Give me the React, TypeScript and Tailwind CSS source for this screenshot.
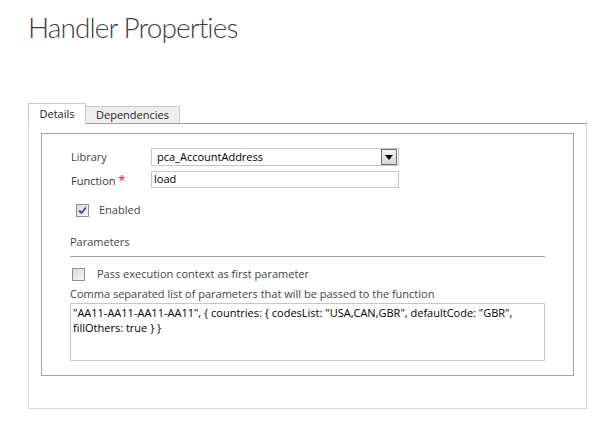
import React from "react";

function CheckBox({ checked }: { checked?: boolean }) {
  return (
    <div className="w-[13px] h-[13px] border border-[#8e8f8f] bg-gradient-to-br from-[#dcdcdc] to-[#f6f6f6] flex items-center justify-center">
      {checked && (
        <svg width="9" height="9" viewBox="0 0 9 9">
          <path d="M1 4.5 L3.5 7 L8 1.5" fill="none" stroke="#3d4f75" strokeWidth="1.8" />
        </svg>
      )}
    </div>
  );
}

export default function App() {
  return (
    <div
      className="w-[616px] h-[432px] bg-white overflow-hidden text-[11px] text-[#444]"
      style={{ fontFamily: '"Open Sans", "Noto Sans", sans-serif' }}
    >
      {/* title */}
      <div className="h-[103px] pl-[28px] pt-[7px]">
        <h1
          className="text-[28px] font-light text-[#404040] leading-[40px] tracking-[-0.9px]"
          style={{ fontFamily: 'Lato, "Open Sans", sans-serif' }}
        >
          Handler Properties
        </h1>
      </div>

      <div className="ml-[28px] w-[559px]">
        {/* tabs */}
        <div className="flex items-end h-[21px]">
          <div className="w-[58px] h-[21px] border border-b-0 border-[#c8c8c8] bg-white flex items-center justify-center text-[#222]">
            Details
          </div>
          <div className="w-[94px] h-[18px] bg-[#efefef] border-t border-r border-b border-[#c8c8c8] border-b-[#a0a0a0] flex items-center justify-center text-[#222]">
            Dependencies
          </div>
          <div className="flex-1 border-b border-[#a0a0a0]" />
        </div>

        {/* panel */}
        <div className="h-[285px] border-l border-r border-b border-[#d6d6d6] pl-[12px] pr-[12px] pt-[9px]">
          <div className="h-[243px] border border-[#a3a3a3] px-[28px]">
            {/* library */}
            <div className="mt-[14px] h-[18px] flex items-center">
              <div className="w-[81px] pl-[1px]">Library</div>
              <div className="flex-1 h-[18px] border border-[#c6c6c6] flex items-center justify-between pl-[5px] pr-[1px] text-black">
                <span>pca_AccountAddress</span>
                <div className="w-[16px] h-[16px] border border-[#6f6f6f] bg-gradient-to-b from-[#f4f4f4] to-[#d6d6d6] flex items-center justify-center">
                  <svg width="8" height="5" viewBox="0 0 8 5">
                    <path d="M0 0 H8 L4 5 Z" fill="#000" />
                  </svg>
                </div>
              </div>
              <div className="w-[146px]" />
            </div>

            {/* function */}
            <div className="mt-[5px] h-[17px] flex items-center">
              <div className="w-[81px] pl-[1px] pt-[3px] text-[#333]">
                Function <span className="text-[#d11] text-[13px]">*</span>
              </div>
              <div className="flex-1 h-[17px] border border-[#c6c6c6] flex items-center pl-[2px] text-black">
                load
              </div>
              <div className="w-[146px]" />
            </div>

            {/* enabled */}
            <div className="mt-[16px] h-[13px] flex items-center pl-[6px]">
              <CheckBox checked />
              <span className="ml-[10px]">Enabled</span>
            </div>

            {/* parameters */}
            <div className="mt-[17px] h-[16px] flex items-center">Parameters</div>
            <div className="mt-[6px] border-b border-[#a0a0a0]" />

            <div className="mt-[11px] h-[13px] flex items-center pl-[2px]">
              <CheckBox />
              <span className="ml-[12px]">Pass execution context as first parameter</span>
            </div>

            <div className="mt-[6px] h-[14px] flex items-center">
              Comma separated list of parameters that will be passed to the function
            </div>

            <div className="mt-[2px] h-[58px] border border-[#c6c6c6] pl-[2px] pt-[1px] text-black leading-[15px] whitespace-nowrap">
              "AA11-AA11-AA11-AA11", {"{"} countries: {"{"} codesList: "USA,CAN,GBR", defaultCode: "GBR",
              <br />
              fillOthers: true {"}"} {"}"}
            </div>
          </div>
        </div>
      </div>
    </div>
  );
}
